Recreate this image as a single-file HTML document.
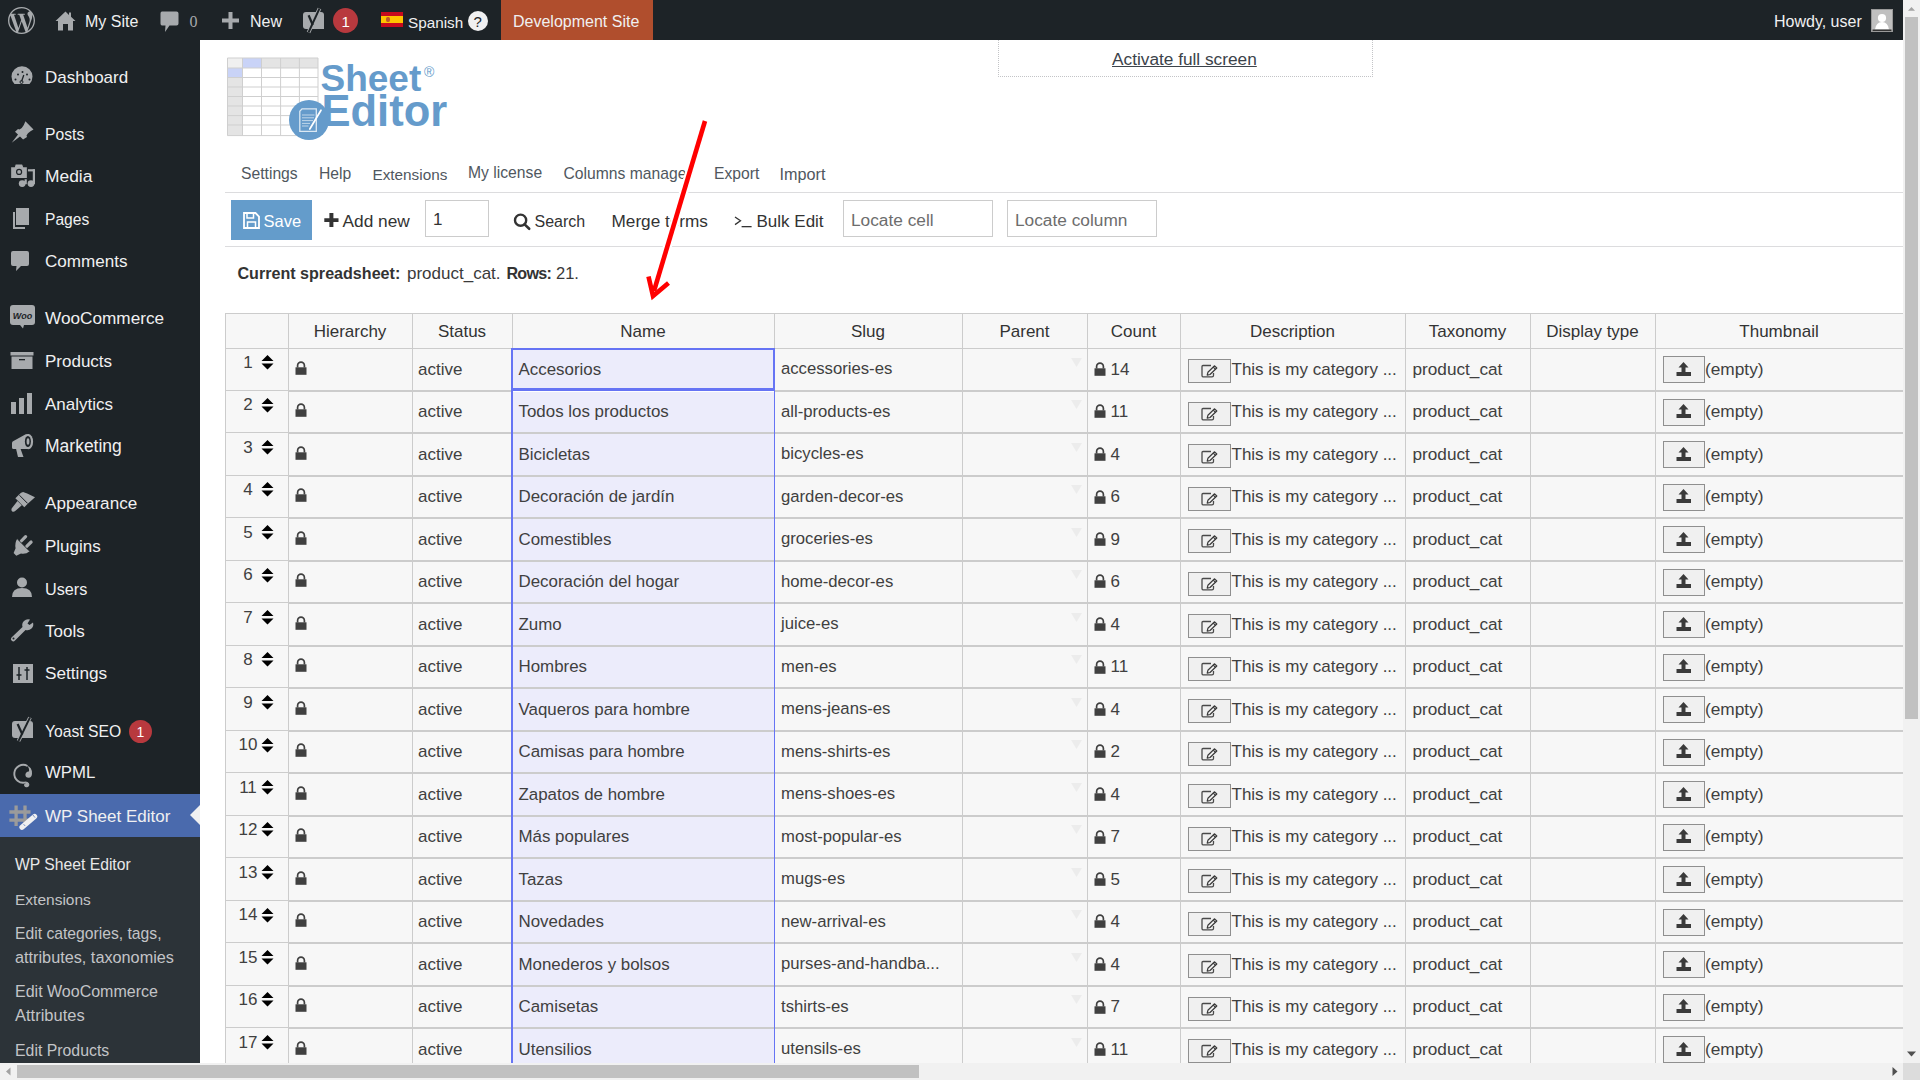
<!DOCTYPE html>
<html><head><meta charset="utf-8"><title>WP Sheet Editor</title>
<style>
html,body{margin:0;padding:0;}
body{width:1920px;height:1080px;overflow:hidden;position:relative;background:#fff;font-family:'Liberation Sans', sans-serif;}
.t{position:absolute;white-space:nowrap;}
.r{position:absolute;box-sizing:content-box;}
svg.r{overflow:visible;}
</style></head><body>
<div class="r" style="left:0px;top:0px;width:1903px;height:40px;background:#1d2327;"></div>
<svg class="r" style="left:8px;top:7px;" width="27" height="27" viewBox="0 0 24 24"><path fill="#a7aaad" d="M21.469 6.825c.84 1.537 1.318 3.3 1.318 5.175 0 3.979-2.156 7.456-5.363 9.325l3.295-9.527c.615-1.54.82-2.771.82-3.864 0-.405-.026-.78-.07-1.11m-7.981.105c.647-.03 1.232-.105 1.232-.105.582-.075.514-.93-.067-.899 0 0-1.755.135-2.88.135-1.064 0-2.85-.15-2.85-.15-.585-.03-.661.855-.075.885 0 0 .54.061 1.125.09l1.68 4.605-2.37 7.08L5.354 6.9c.649-.03 1.234-.1 1.234-.1.585-.075.516-.93-.065-.896 0 0-1.746.138-2.874.138-.2 0-.438-.008-.69-.015C4.911 3.15 8.235 1.215 12 1.215c2.809 0 5.365 1.072 7.286 2.833-.046-.003-.091-.009-.141-.009-1.06 0-1.812.923-1.812 1.914 0 .89.513 1.643 1.06 2.531.411.72.89 1.643.89 2.977 0 .915-.354 1.994-.821 3.479l-1.075 3.585-3.9-11.61.001.014zM12 22.784c-1.059 0-2.081-.153-3.048-.437l3.237-9.406 3.315 9.087c.024.053.05.101.078.149-1.12.393-2.325.609-3.582.609M1.211 12c0-1.564.336-3.05.935-4.39L7.29 21.709C3.694 19.96 1.212 16.271 1.211 12M12 0C5.385 0 0 5.385 0 12s5.385 12 12 12 12-5.385 12-12S18.615 0 12 0"/></svg>
<svg class="r" style="left:55px;top:11px;" width="21" height="20" viewBox="0 0 21 20"><path d="M10.5 0.5 L0.5 10 L3 10 L3 19.5 L8 19.5 L8 13 L13 13 L13 19.5 L18 19.5 L18 10 L20.5 10 L16 5.8 L16 1.5 L14 1.5 L14 3.9 Z" fill="#a7aaad"/></svg>
<div class="t" style="left:85.00px;top:14.46px;font-size:16px;line-height:16px;color:#f0f0f1;">My Site</div>
<svg class="r" style="left:160px;top:11px;" width="19" height="22" viewBox="0 0 19 22"><path d="M2 0.5 H16.5 Q18.5 0.5 18.5 2.5 V12.5 Q18.5 14.5 16.5 14.5 H9.5 L5 21 L5.5 14.5 H2 Q0.5 14.5 0.5 12.5 V2.5 Q0.5 0.5 2 0.5 Z" fill="#a7aaad"/></svg>
<div class="t" style="left:189.50px;top:14.46px;font-size:16px;line-height:16px;color:#a7aaad;font-family:'Liberation Serif',serif;">0</div>
<svg class="r" style="left:222px;top:12px;" width="17" height="17" viewBox="0 0 17 17"><path d="M6.5 0 H10.5 V6.5 H17 V10.5 H10.5 V17 H6.5 V10.5 H0 V6.5 H6.5 Z" fill="#a7aaad"/></svg>
<div class="t" style="left:250.00px;top:14.46px;font-size:16px;line-height:16px;color:#f0f0f1;">New</div>
<svg class="r" style="left:295px;top:0px;" width="40" height="40" viewBox="0 0 40 40"><path d="M8 15 Q8 12 11 12 H26 Q29 12 29 15 V29 H11 Q8 29 8 26 Z" fill="#a7aaad"/><path d="M24.5 8.5 L13.5 32.5" stroke="#a7aaad" stroke-width="3.8"/><path d="M24.5 8.5 L13.5 32.5" stroke="#1d2327" stroke-width="1.9"/><path d="M13.6 15.2 L17.8 25" stroke="#1d2327" stroke-width="2.2"/></svg>
<div class="r" style="left:333px;top:8px;width:25px;height:25px;border-radius:50%;background:#b8393e"></div>
<div class="t" style="left:341.50px;top:13.80px;font-size:15px;line-height:15px;color:#fff;">1</div>
<div class="r" style="left:381px;top:12px;width:22px;height:15px;background:#c60b1e;"></div>
<div class="r" style="left:381px;top:16px;width:22px;height:7px;background:#ffc400;"></div>
<div class="r" style="left:386px;top:17px;width:4px;height:5px;border-radius:40%;background:#c1592a"></div>
<div class="t" style="left:408.00px;top:14.55px;font-size:15.3px;line-height:15.3px;color:#f0f0f1;">Spanish</div>
<div class="r" style="left:468px;top:11px;width:20px;height:20px;border-radius:50%;background:#f0f0f1"></div>
<div class="t" style="left:473.50px;top:13.80px;font-size:15px;line-height:15px;color:#1d2327;">?</div>
<div class="r" style="left:501px;top:0px;width:152px;height:40px;background:#b04e2d;"></div>
<div class="t" style="left:513.00px;top:14.46px;font-size:16px;line-height:16px;color:#f0f0f1;">Development Site</div>
<div class="t" style="left:1774.00px;top:14.46px;font-size:16px;line-height:16px;color:#f0f0f1;">Howdy, user</div>
<div class="r" style="left:1871px;top:9px;width:22px;height:23px;background:#c0c0c0;box-shadow:inset 0 0 0 1px #999"></div>
<svg class="r" style="left:1872px;top:10px;" width="20" height="21" viewBox="0 0 20 21"><circle cx="10" cy="8" r="4.1" fill="#fff"/><path d="M3 19.5 Q4 12 10 12 Q16 12 17 19.5 Z" fill="#fff"/><rect x="0.5" y="19.5" width="19" height="1.5" fill="#333"/></svg>
<div class="r" style="left:0px;top:40px;width:200px;height:1023px;background:#1d2327;"></div>
<div class="t" style="left:45.00px;top:68.61px;font-size:17px;line-height:17px;color:#f0f0f1;">Dashboard</div>
<svg class="r" style="left:11px;top:67px;" width="26" height="24" viewBox="0 0 26 24"><path d="M3.5 17 A10.5 10.5 0 1 1 18.5 17 Z" fill="#a7aaad"/><circle cx="4.5" cy="12.5" r="1" fill="#1d2327"/><circle cx="7" cy="7.5" r="1" fill="#1d2327"/><circle cx="11.5" cy="5" r="1" fill="#1d2327"/><circle cx="16" cy="7.5" r="1" fill="#1d2327"/><circle cx="18.5" cy="12.5" r="1" fill="#1d2327"/><path d="M12.8 8 L10.5 14.5" stroke="#1d2327" stroke-width="1.3"/><circle cx="10.5" cy="15" r="1.5" fill="none" stroke="#1d2327" stroke-width="1"/></svg>
<div class="t" style="left:45.00px;top:126.96px;font-size:15.7px;line-height:15.7px;color:#f0f0f1;">Posts</div>
<svg class="r" style="left:10px;top:121px;" width="26" height="24" viewBox="0 0 26 24"><path d="M15.4 0.3 L23.5 8.4 L20.5 10.2 Q17.5 12 16.5 14.5 L17 16 L13.1 18.5 L10 15.5 L1.7 21.8 L8 13.5 L5 10.7 L8 8 L9.5 8.5 Q12 7.5 13.8 4 Z" fill="#a7aaad"/></svg>
<div class="t" style="left:45.00px;top:168.02px;font-size:17.4px;line-height:17.4px;color:#f0f0f1;">Media</div>
<svg class="r" style="left:10px;top:164px;" width="26" height="24" viewBox="0 0 26 24"><rect x="16.3" y="5.2" width="8.5" height="2.2" fill="#a7aaad"/><rect x="14.6" y="5.2" width="2.2" height="15" fill="#a7aaad"/><rect x="22.8" y="5.2" width="2.2" height="15" fill="#a7aaad"/><circle cx="12.2" cy="19.6" r="3.4" fill="#a7aaad"/><circle cx="21" cy="19.6" r="3.4" fill="#a7aaad"/><path d="M0.6 2.6 H4.4 L5.2 0 H12.6 L13.6 2.6 H17.4 V14.6 H0.6 Z" fill="#a7aaad" stroke="#1d2327" stroke-width="1.1"/><circle cx="9.1" cy="7.9" r="3.1" fill="#1d2327"/><circle cx="9.1" cy="7.9" r="1.9" fill="#a7aaad"/></svg>
<div class="t" style="left:45.00px;top:212.04px;font-size:15.6px;line-height:15.6px;color:#f0f0f1;">Pages</div>
<svg class="r" style="left:10px;top:207px;" width="26" height="24" viewBox="0 0 26 24"><path d="M6 1 H19 V18 H6 Z" fill="#a7aaad"/><path d="M3 5 H5 V20 H15 V22 H3 Z" fill="#a7aaad"/></svg>
<div class="t" style="left:45.00px;top:253.27px;font-size:17.1px;line-height:17.1px;color:#f0f0f1;">Comments</div>
<svg class="r" style="left:11px;top:250px;" width="26" height="24" viewBox="0 0 26 24"><path d="M2 1 H16 Q18 1 18 3 V14 Q18 16 16 16 H10 L5 21 L5.5 16 H2 Q0 16 0 14 V3 Q0 1 2 1 Z" fill="#a7aaad"/></svg>
<div class="t" style="left:45.00px;top:310.44px;font-size:17.2px;line-height:17.2px;color:#f0f0f1;">WooCommerce</div>
<svg class="r" style="left:10px;top:305px;" width="26" height="24" viewBox="0 0 26 24"><rect x="0" y="0" width="25" height="20" rx="3" fill="#a7aaad"/><path d="M10 20 L13 23.5 L14 20 Z" fill="#a7aaad"/><text x="12.5" y="13.5" font-family="Liberation Sans" font-style="italic" font-size="9" font-weight="bold" text-anchor="middle" fill="#1d2327">Woo</text></svg>
<div class="t" style="left:45.00px;top:353.11px;font-size:17px;line-height:17px;color:#f0f0f1;">Products</div>
<svg class="r" style="left:10px;top:352px;" width="26" height="24" viewBox="0 0 26 24"><rect x="0.5" y="0" width="23" height="3.5" fill="#a7aaad"/><rect x="1.5" y="4.5" width="21" height="12.5" fill="#a7aaad"/><rect x="9" y="7" width="6" height="1.3" fill="#1d2327"/></svg>
<div class="t" style="left:45.00px;top:395.61px;font-size:17px;line-height:17px;color:#f0f0f1;">Analytics</div>
<svg class="r" style="left:10px;top:393px;" width="26" height="24" viewBox="0 0 26 24"><rect x="1" y="9" width="5" height="12" fill="#a7aaad"/><rect x="9" y="5" width="5" height="16" fill="#a7aaad"/><rect x="17" y="0" width="5" height="21" fill="#a7aaad"/></svg>
<div class="t" style="left:45.00px;top:437.69px;font-size:17.5px;line-height:17.5px;color:#f0f0f1;">Marketing</div>
<svg class="r" style="left:10px;top:432px;" width="26" height="24" viewBox="0 0 26 24"><path d="M2 11 Q2 9.8 3.5 9.1 L15.7 2.3 H19 V17 H3.5 Q2 17 2 15.5 Z" fill="#a7aaad"/><ellipse cx="18.3" cy="9.7" rx="4.8" ry="7.6" fill="#a7aaad"/><ellipse cx="17.9" cy="9.5" rx="3" ry="5.6" fill="#1d2327"/><ellipse cx="18" cy="9.5" rx="1.4" ry="3.2" fill="#a7aaad"/><path d="M6.1 17 H10.6 L13.5 24.9 H8 Z" fill="#a7aaad"/></svg>
<div class="t" style="left:45.00px;top:495.27px;font-size:17.1px;line-height:17.1px;color:#f0f0f1;">Appearance</div>
<svg class="r" style="left:10px;top:491px;" width="26" height="24" viewBox="0 0 26 24"><path d="M9.1 3.6 Q11 1 13.1 1 Q15 1.5 17.2 2.5 L25 6.2 L18 12.5 Z" fill="#a7aaad"/><path d="M5.4 7.3 L9.1 3.6 L18 12.5 L14.3 16.2 Z" fill="#a7aaad"/><path d="M9.4 4.3 L17.4 12.3" stroke="#1d2327" stroke-width="0.9"/><path d="M7.5 10 L11.8 14.3 L5.5 19.8 Q3.5 21.6 2 20.2 Q0.6 18.6 2.4 16.6 Z" fill="#a7aaad"/></svg>
<div class="t" style="left:45.00px;top:537.86px;font-size:17px;line-height:17px;color:#f0f0f1;">Plugins</div>
<svg class="r" style="left:10px;top:534px;" width="26" height="24" viewBox="0 0 26 24"><path d="M11.3 7 L15.6 2.6 M16.7 12.3 L21.1 8" stroke="#a7aaad" stroke-width="3.2" stroke-linecap="round"/><path d="M7.2 4.8 L19.6 17.2 Q16 20.5 11 19.6 L6.3 21.8 L3.6 19 L5.6 14.2 Q4.6 9 7.2 4.8 Z" fill="#a7aaad"/><path d="M7.6 5.2 L19.2 16.8" stroke="#1d2327" stroke-width="0.8"/></svg>
<div class="t" style="left:45.00px;top:581.04px;font-size:16.2px;line-height:16.2px;color:#f0f0f1;">Users</div>
<svg class="r" style="left:11px;top:577px;" width="26" height="24" viewBox="0 0 26 24"><circle cx="11" cy="5.5" r="5" fill="#a7aaad"/><path d="M1 20 Q1 11 11 11 Q21 11 21 20 Z" fill="#a7aaad"/></svg>
<div class="t" style="left:45.00px;top:622.86px;font-size:17px;line-height:17px;color:#f0f0f1;">Tools</div>
<svg class="r" style="left:10px;top:619px;" width="26" height="24" viewBox="0 0 26 24"><path d="M20 0.5 A6 6 0 0 0 12.5 8 L1.5 18.5 A2 2 0 0 0 5 21.5 L15.5 11 A6 6 0 0 0 23 3.5 L19.5 6 L17.5 4.5 Z" fill="#a7aaad"/><circle cx="3.5" cy="19.5" r="1" fill="#1d2327"/></svg>
<div class="t" style="left:45.00px;top:665.19px;font-size:17.2px;line-height:17.2px;color:#f0f0f1;">Settings</div>
<svg class="r" style="left:12px;top:664px;" width="26" height="24" viewBox="0 0 26 24"><rect x="1" y="0" width="20" height="19" fill="#a7aaad"/><path d="M7 3 V16 M15 3 V16" stroke="#1d2327" stroke-width="1.5"/><path d="M4.5 11 H9.5 M12.5 6 H17.5" stroke="#1d2327" stroke-width="1.5"/></svg>
<div class="t" style="left:45.00px;top:723.71px;font-size:15.7px;line-height:15.7px;color:#f0f0f1;">Yoast SEO</div>
<svg class="r" style="left:10px;top:721px;" width="26" height="24" viewBox="0 0 26 24"><path d="M2 3 Q2 0 5 0 H20 Q23 0 23 3 V17 H5 Q2 17 2 14 Z" fill="#a7aaad"/><path d="M20 -3.5 L8.5 20" stroke="#a7aaad" stroke-width="3.8"/><path d="M20 -3.5 L8.5 20" stroke="#1d2327" stroke-width="1.9"/><path d="M7.6 3 L12.4 13.5" stroke="#1d2327" stroke-width="2.2"/></svg>
<div class="t" style="left:45.00px;top:765.28px;font-size:16.8px;line-height:16.8px;color:#f0f0f1;">WPML</div>
<svg class="r" style="left:11px;top:764px;" width="26" height="24" viewBox="0 0 26 24"><path d="M16.5 2 A8.9 8.9 0 1 0 14.8 18.3" fill="none" stroke="#a7aaad" stroke-width="1.9"/><path d="M16 1.8 Q21 3 21 9.5 Q21 13.5 17.6 13.8 Q14.4 13.8 14.4 10.8 Q14.6 8 17.8 7.6 Q19 5 16 1.8 Z" fill="#a7aaad"/><path d="M14.5 18.2 Q18.5 18.8 17.6 21.4 Q16.5 23.2 14.6 22.4 Q13 21.4 14.2 20" fill="#a7aaad" stroke="#a7aaad" stroke-width="1.2"/></svg>
<div class="r" style="left:0px;top:794px;width:200px;height:43px;background:#4a6aad;"></div>
<svg class="r" style="left:190px;top:805px;" width="10" height="20" viewBox="0 0 10 20"><path d="M10 0 L0 10 L10 20 Z" fill="#f0f0f1"/></svg>
<div class="t" style="left:45.00px;top:807.61px;font-size:17px;line-height:17px;color:#f0f0f1;">WP Sheet Editor</div>
<svg class="r" style="left:8px;top:804px;" width="26" height="24" viewBox="0 0 26 24"><path d="M8.1 1.4 V22 M17 1.4 V22 M1.4 8 H22.5 M1.4 16.2 H22.5" stroke="#9b9b9b" stroke-width="3.3"/><path d="M26.6 12.5 L14 23.2" stroke="#f0f0f1" stroke-width="5.2" stroke-linecap="round"/><path d="M24.8 10.8 L27 13.6" stroke="#4a6aad" stroke-width="0.7"/><path d="M15.6 20.2 L17.2 22" stroke="#4a6aad" stroke-width="0.7"/></svg>
<div class="r" style="left:129px;top:720px;width:23px;height:23px;border-radius:50%;background:#b8393e"></div>
<div class="t" style="left:136.50px;top:724.65px;font-size:14px;line-height:14px;color:#fff;">1</div>
<div class="r" style="left:0px;top:837px;width:200px;height:226px;background:#2c3338;"></div>
<div class="t" style="left:15.00px;top:856.71px;font-size:15.7px;line-height:15.7px;color:#e8e8e8;">WP Sheet Editor</div>
<div class="t" style="left:15.00px;top:892.38px;font-size:15.5px;line-height:15.5px;color:#c3c4c7;">Extensions</div>
<div class="t" style="left:15.00px;top:926.31px;font-size:15.7px;line-height:15.7px;color:#c3c4c7;">Edit categories, tags,</div>
<div class="t" style="left:15.00px;top:948.74px;font-size:16.25px;line-height:16.25px;color:#c3c4c7;">attributes, taxonomies</div>
<div class="t" style="left:15.00px;top:984.46px;font-size:16.0px;line-height:16.0px;color:#c3c4c7;">Edit WooCommerce</div>
<div class="t" style="left:15.00px;top:1007.03px;font-size:16.5px;line-height:16.5px;color:#c3c4c7;">Attributes</div>
<div class="t" style="left:15.00px;top:1042.58px;font-size:15.85px;line-height:15.85px;color:#c3c4c7;">Edit Products</div>
<div class="r" style="left:200px;top:40px;width:1703px;height:1023px;background:#ffffff;"></div>
<div class="r" style="left:998px;top:40px;width:373px;height:36px;border:1px dotted #c3c4c7;border-top:none"></div>
<div class="t" style="left:1112.00px;top:50.90px;font-size:17.25px;line-height:17.25px;color:#3c434a;text-decoration:underline;">Activate full screen</div>
<svg class="r" style="left:0;top:0" width="460" height="150" viewBox="0 0 460 150"><rect x="227.5" y="58" width="90.5" height="10" fill="#e4e4e4"/><rect x="227.5" y="58" width="15.0" height="77.6" fill="#e4e4e4"/><rect x="227.5" y="58" width="15.0" height="10" fill="#f0f0f0"/><rect x="242.5" y="58" width="19.0" height="10" fill="#c9d3f7"/><rect x="227.5" y="68" width="15.0" height="9.5" fill="#c9d3f7"/><line x1="227.5" y1="58" x2="227.5" y2="135.6" stroke="#cfcfcf" stroke-width="1"/><line x1="242.5" y1="58" x2="242.5" y2="135.6" stroke="#cfcfcf" stroke-width="1"/><line x1="261.5" y1="58" x2="261.5" y2="135.6" stroke="#cfcfcf" stroke-width="1"/><line x1="280.6" y1="58" x2="280.6" y2="135.6" stroke="#cfcfcf" stroke-width="1"/><line x1="299.4" y1="58" x2="299.4" y2="135.6" stroke="#cfcfcf" stroke-width="1"/><line x1="318" y1="58" x2="318" y2="135.6" stroke="#cfcfcf" stroke-width="1"/><line x1="227.5" y1="58" x2="318" y2="58" stroke="#cfcfcf" stroke-width="1"/><line x1="227.5" y1="68" x2="318" y2="68" stroke="#cfcfcf" stroke-width="1"/><line x1="227.5" y1="77.5" x2="318" y2="77.5" stroke="#cfcfcf" stroke-width="1"/><line x1="227.5" y1="87" x2="318" y2="87" stroke="#cfcfcf" stroke-width="1"/><line x1="227.5" y1="96.5" x2="318" y2="96.5" stroke="#cfcfcf" stroke-width="1"/><line x1="227.5" y1="106" x2="318" y2="106" stroke="#cfcfcf" stroke-width="1"/><line x1="227.5" y1="115.6" x2="318" y2="115.6" stroke="#cfcfcf" stroke-width="1"/><line x1="227.5" y1="125" x2="318" y2="125" stroke="#cfcfcf" stroke-width="1"/><line x1="227.5" y1="135.6" x2="318" y2="135.6" stroke="#cfcfcf" stroke-width="1"/><circle cx="309" cy="120" r="20" fill="#659bcb"/><path d="M302 108.8 H316.3 V131.4 H299.8 V111.2 Z" fill="none" stroke="#dbe8f3" stroke-width="1.3"/><path d="M302 115 H314.5 M302 117.8 H314 M302 120.6 H313 M302 123.4 H310 M302 126 H308.5" stroke="#c9dcec" stroke-width="0.9"/><path d="M309.8 129 L321 110.2" stroke="#fff" stroke-width="1.7" stroke-linecap="round"/></svg>
<div class="t" style="left:320.50px;top:60.18px;font-size:37px;line-height:37px;color:#659bcb;font-weight:bold;">Sheet</div>
<div class="t" style="left:321.50px;top:90.18px;font-size:43.5px;line-height:43.5px;color:#659bcb;font-weight:bold;">Editor</div>
<div class="t" style="left:424.00px;top:64.65px;font-size:14px;line-height:14px;color:#659bcb;">&#174;</div>
<div class="t" style="left:241.00px;top:166.21px;font-size:15.7px;line-height:15.7px;color:#50575e;">Settings</div>
<div class="t" style="left:319.00px;top:166.21px;font-size:15.7px;line-height:15.7px;color:#50575e;">Help</div>
<div class="t" style="left:372.50px;top:166.55px;font-size:15.3px;line-height:15.3px;color:#50575e;">Extensions</div>
<div class="t" style="left:468.00px;top:164.71px;font-size:15.7px;line-height:15.7px;color:#50575e;">My license</div>
<div class="t" style="left:563.50px;top:166.21px;font-size:15.7px;line-height:15.7px;color:#50575e;">Columns manager</div>
<div class="t" style="left:714.00px;top:166.21px;font-size:15.7px;line-height:15.7px;color:#50575e;">Export</div>
<div class="t" style="left:779.50px;top:165.79px;font-size:16.2px;line-height:16.2px;color:#50575e;">Import</div>
<div class="r" style="left:225px;top:192px;width:1678px;height:1px;background:#dcdcde;"></div>
<div class="r" style="left:231px;top:200px;width:81px;height:40px;background:#649ccb;"></div>
<svg class="r" style="left:243px;top:212px;" width="17" height="17" viewBox="0 0 17 17"><path d="M1 1 H12.5 L16 4.5 V16 H1 Z" fill="none" stroke="#fff" stroke-width="1.8"/><rect x="4" y="1" width="6.5" height="5" fill="none" stroke="#fff" stroke-width="1.5"/><rect x="4.5" y="10" width="8" height="6" fill="none" stroke="#fff" stroke-width="1.5"/></svg>
<div class="t" style="left:263.50px;top:213.03px;font-size:16.5px;line-height:16.5px;color:#ffffff;">Save</div>
<svg class="r" style="left:324px;top:213px;" width="15" height="14" viewBox="0 0 15 14"><path d="M5.4 0 H9.4 V5.2 H14.5 V9 H9.4 V14 H5.4 V9 H0.3 V5.2 H5.4 Z" fill="#333"/></svg>
<div class="t" style="left:342.50px;top:213.36px;font-size:17.3px;line-height:17.3px;color:#333;">Add new</div>
<div class="r" style="left:425px;top:200px;width:62px;height:35px;border:1px solid #ccc;background:#fff"></div>
<div class="t" style="left:433.00px;top:211.11px;font-size:17px;line-height:17px;color:#333;">1</div>
<svg class="r" style="left:513px;top:213px;" width="18" height="18" viewBox="0 0 18 18"><circle cx="7.6" cy="7.2" r="5.6" fill="none" stroke="#333" stroke-width="2.4"/><path d="M11.6 11.4 L16.2 15.8" stroke="#333" stroke-width="2.6" stroke-linecap="round"/></svg>
<div class="t" style="left:534.50px;top:214.46px;font-size:16px;line-height:16px;color:#333;">Search</div>
<div class="t" style="left:611.50px;top:213.44px;font-size:17.2px;line-height:17.2px;color:#333;">Merge terms</div>
<svg class="r" style="left:734px;top:216px;" width="18" height="12" viewBox="0 0 18 12"><path d="M1 1 L6.5 4.8 L1 8.6" fill="none" stroke="#333" stroke-width="1.3"/><rect x="7.6" y="10" width="10" height="1.3" fill="#333"/></svg>
<div class="t" style="left:756.50px;top:212.61px;font-size:17px;line-height:17px;color:#333;">Bulk Edit</div>
<div class="r" style="left:843px;top:200px;width:148px;height:35px;border:1px solid #ccc;background:#fff"></div>
<div class="t" style="left:851.00px;top:212.36px;font-size:17.3px;line-height:17.3px;color:#6d6d6d;">Locate cell</div>
<div class="r" style="left:1007px;top:200px;width:148px;height:35px;border:1px solid #ccc;background:#fff"></div>
<div class="t" style="left:1015.00px;top:212.36px;font-size:17.3px;line-height:17.3px;color:#6d6d6d;">Locate column</div>
<div class="r" style="left:225px;top:246px;width:1678px;height:1px;background:#dcdcde;"></div>
<div class="t" style="left:237.50px;top:265.37px;font-size:16.1px;line-height:16.1px;color:#333;"><b>Current spreadsheet:</b></div>
<div class="t" style="left:407.00px;top:264.61px;font-size:17px;line-height:17px;color:#3a3a3a;">product_cat.</div>
<div class="t" style="left:506.50px;top:265.37px;font-size:16.1px;line-height:16.1px;color:#333;letter-spacing:-0.75px;"><b>Rows:</b></div>
<div class="t" style="left:556.00px;top:265.03px;font-size:16.5px;line-height:16.5px;color:#3a3a3a;">21.</div>
<div class="r" style="left:225px;top:313px;width:1678px;height:750px;background:#f7f7f7;"></div>
<div class="r" style="left:512px;top:349px;width:262px;height:714px;background:#ececfb;"></div>
<div class="r" style="left:225px;top:313px;width:1678px;height:1px;background:#cccccc;"></div>
<div class="r" style="left:225px;top:348px;width:1678px;height:1px;background:#cccccc;"></div>
<div class="r" style="left:225px;top:313px;width:1px;height:750px;background:#cccccc;"></div>
<div class="r" style="left:288px;top:313px;width:1px;height:750px;background:#cccccc;"></div>
<div class="r" style="left:412px;top:313px;width:1px;height:750px;background:#cccccc;"></div>
<div class="r" style="left:512px;top:313px;width:1px;height:750px;background:#cccccc;"></div>
<div class="r" style="left:774px;top:313px;width:1px;height:750px;background:#cccccc;"></div>
<div class="r" style="left:962px;top:313px;width:1px;height:750px;background:#cccccc;"></div>
<div class="r" style="left:1087px;top:313px;width:1px;height:750px;background:#cccccc;"></div>
<div class="r" style="left:1180px;top:313px;width:1px;height:750px;background:#cccccc;"></div>
<div class="r" style="left:1405px;top:313px;width:1px;height:750px;background:#cccccc;"></div>
<div class="r" style="left:1530px;top:313px;width:1px;height:750px;background:#cccccc;"></div>
<div class="r" style="left:1655px;top:313px;width:1px;height:750px;background:#cccccc;"></div>
<div class="r" style="left:288px;top:390px;width:1615px;height:2px;background:#cccccc;"></div>
<div class="r" style="left:225px;top:390px;width:63px;height:1px;background:#cccccc;"></div>
<div class="t" style="left:228px;top:353.51px;width:40px;text-align:center;font-size:17px;line-height:17px;color:#404040">1</div>
<svg class="r" style="left:261px;top:355px;" width="13" height="15" viewBox="0 0 13 15"><path d="M6.5 0 L12.5 6 H0.5 Z M0.5 8.5 H12.5 L6.5 14.5 Z" fill="#000"/></svg>
<svg class="r" style="left:295px;top:361px" width="12" height="14" viewBox="0 0 12 14"><path d="M2.6 6.5 V4.6 A3.4 3.4 0 0 1 9.4 4.6 V6.5" fill="none" stroke="#404040" stroke-width="1.7"/><rect x="0.5" y="6.3" width="11" height="7.5" fill="#404040"/></svg>
<div class="t" style="left:418.00px;top:360.91px;font-size:17px;line-height:17px;color:#404040;">active</div>
<div class="t" style="left:518.50px;top:361.99px;font-size:16.9px;line-height:16.9px;color:#404040;">Accesorios</div>
<div class="t" style="left:781.00px;top:361.16px;font-size:16.7px;line-height:16.7px;color:#404040;">accessories-es</div>
<svg class="r" style="left:1071px;top:358px;" width="11" height="9" viewBox="0 0 11 9"><path d="M0 0 H11 L5.5 9 Z" fill="#ececec"/></svg>
<svg class="r" style="left:1094px;top:362px" width="12" height="14" viewBox="0 0 12 14"><path d="M2.6 6.5 V4.6 A3.4 3.4 0 0 1 9.4 4.6 V6.5" fill="none" stroke="#404040" stroke-width="1.7"/><rect x="0.5" y="6.3" width="11" height="7.5" fill="#404040"/></svg>
<div class="t" style="left:1110.50px;top:360.91px;font-size:17px;line-height:17px;color:#404040;">14</div>
<div class="r" style="left:1188px;top:359px;width:41px;height:22px;border:1px solid #8f8f8f;background:#f0f0f0"></div>
<svg class="r" style="left:1200px;top:364px;" width="18" height="14" viewBox="0 0 18 14"><path d="M11 1.5 H3 Q2 1.5 2 2.5 V11.5 Q2 12.8 3 12.8 H12 Q13.5 12.8 13.5 11.5 V9" fill="none" stroke="#4a4a4a" stroke-width="1.3"/><path d="M7.2 11.2 L7.9 8.3 L14.6 1.8 L16.8 4 L10 10.5 Z" fill="none" stroke="#3a3a3a" stroke-width="1.2" stroke-linejoin="round"/><path d="M13.3 3.1 L15.5 5.3" stroke="#3a3a3a" stroke-width="1.2"/></svg>
<div class="t" style="left:1231.50px;top:360.91px;font-size:17px;line-height:17px;color:#404040;">This is my category ...</div>
<div class="t" style="left:1412.50px;top:360.74px;font-size:17.2px;line-height:17.2px;color:#404040;">product_cat</div>
<div class="r" style="left:1663px;top:356px;width:40px;height:25px;border:1px solid #8f8f8f;background:#f0f0f0"></div>
<svg class="r" style="left:1676px;top:362px;" width="16" height="14" viewBox="0 0 16 14"><path d="M7.5 0 L12.5 5.5 H9.5 V10.5 H5.5 V5.5 H2.5 Z" fill="#3a3a3a"/><rect x="0.5" y="10" width="14.5" height="4" fill="#3a3a3a"/></svg>
<div class="t" style="left:1705.00px;top:360.66px;font-size:17.3px;line-height:17.3px;color:#404040;">(empty)</div>
<div class="r" style="left:288px;top:432px;width:1615px;height:2px;background:#cccccc;"></div>
<div class="r" style="left:225px;top:432px;width:63px;height:1px;background:#cccccc;"></div>
<div class="t" style="left:228px;top:396.01px;width:40px;text-align:center;font-size:17px;line-height:17px;color:#404040">2</div>
<svg class="r" style="left:261px;top:398px;" width="13" height="15" viewBox="0 0 13 15"><path d="M6.5 0 L12.5 6 H0.5 Z M0.5 8.5 H12.5 L6.5 14.5 Z" fill="#000"/></svg>
<svg class="r" style="left:295px;top:403px" width="12" height="14" viewBox="0 0 12 14"><path d="M2.6 6.5 V4.6 A3.4 3.4 0 0 1 9.4 4.6 V6.5" fill="none" stroke="#404040" stroke-width="1.7"/><rect x="0.5" y="6.3" width="11" height="7.5" fill="#404040"/></svg>
<div class="t" style="left:418.00px;top:403.41px;font-size:17px;line-height:17px;color:#404040;">active</div>
<div class="t" style="left:518.50px;top:404.49px;font-size:16.9px;line-height:16.9px;color:#404040;">Todos los productos</div>
<div class="t" style="left:781.00px;top:403.66px;font-size:16.7px;line-height:16.7px;color:#404040;">all-products-es</div>
<svg class="r" style="left:1071px;top:400px;" width="11" height="9" viewBox="0 0 11 9"><path d="M0 0 H11 L5.5 9 Z" fill="#ececec"/></svg>
<svg class="r" style="left:1094px;top:404px" width="12" height="14" viewBox="0 0 12 14"><path d="M2.6 6.5 V4.6 A3.4 3.4 0 0 1 9.4 4.6 V6.5" fill="none" stroke="#404040" stroke-width="1.7"/><rect x="0.5" y="6.3" width="11" height="7.5" fill="#404040"/></svg>
<div class="t" style="left:1110.50px;top:403.41px;font-size:17px;line-height:17px;color:#404040;">11</div>
<div class="r" style="left:1188px;top:402px;width:41px;height:22px;border:1px solid #8f8f8f;background:#f0f0f0"></div>
<svg class="r" style="left:1200px;top:407px;" width="18" height="14" viewBox="0 0 18 14"><path d="M11 1.5 H3 Q2 1.5 2 2.5 V11.5 Q2 12.8 3 12.8 H12 Q13.5 12.8 13.5 11.5 V9" fill="none" stroke="#4a4a4a" stroke-width="1.3"/><path d="M7.2 11.2 L7.9 8.3 L14.6 1.8 L16.8 4 L10 10.5 Z" fill="none" stroke="#3a3a3a" stroke-width="1.2" stroke-linejoin="round"/><path d="M13.3 3.1 L15.5 5.3" stroke="#3a3a3a" stroke-width="1.2"/></svg>
<div class="t" style="left:1231.50px;top:403.41px;font-size:17px;line-height:17px;color:#404040;">This is my category ...</div>
<div class="t" style="left:1412.50px;top:403.24px;font-size:17.2px;line-height:17.2px;color:#404040;">product_cat</div>
<div class="r" style="left:1663px;top:399px;width:40px;height:25px;border:1px solid #8f8f8f;background:#f0f0f0"></div>
<svg class="r" style="left:1676px;top:404px;" width="16" height="14" viewBox="0 0 16 14"><path d="M7.5 0 L12.5 5.5 H9.5 V10.5 H5.5 V5.5 H2.5 Z" fill="#3a3a3a"/><rect x="0.5" y="10" width="14.5" height="4" fill="#3a3a3a"/></svg>
<div class="t" style="left:1705.00px;top:403.16px;font-size:17.3px;line-height:17.3px;color:#404040;">(empty)</div>
<div class="r" style="left:288px;top:475px;width:1615px;height:2px;background:#cccccc;"></div>
<div class="r" style="left:225px;top:475px;width:63px;height:1px;background:#cccccc;"></div>
<div class="t" style="left:228px;top:438.51px;width:40px;text-align:center;font-size:17px;line-height:17px;color:#404040">3</div>
<svg class="r" style="left:261px;top:440px;" width="13" height="15" viewBox="0 0 13 15"><path d="M6.5 0 L12.5 6 H0.5 Z M0.5 8.5 H12.5 L6.5 14.5 Z" fill="#000"/></svg>
<svg class="r" style="left:295px;top:446px" width="12" height="14" viewBox="0 0 12 14"><path d="M2.6 6.5 V4.6 A3.4 3.4 0 0 1 9.4 4.6 V6.5" fill="none" stroke="#404040" stroke-width="1.7"/><rect x="0.5" y="6.3" width="11" height="7.5" fill="#404040"/></svg>
<div class="t" style="left:418.00px;top:445.91px;font-size:17px;line-height:17px;color:#404040;">active</div>
<div class="t" style="left:518.50px;top:446.99px;font-size:16.9px;line-height:16.9px;color:#404040;">Bicicletas</div>
<div class="t" style="left:781.00px;top:446.16px;font-size:16.7px;line-height:16.7px;color:#404040;">bicycles-es</div>
<svg class="r" style="left:1071px;top:443px;" width="11" height="9" viewBox="0 0 11 9"><path d="M0 0 H11 L5.5 9 Z" fill="#ececec"/></svg>
<svg class="r" style="left:1094px;top:447px" width="12" height="14" viewBox="0 0 12 14"><path d="M2.6 6.5 V4.6 A3.4 3.4 0 0 1 9.4 4.6 V6.5" fill="none" stroke="#404040" stroke-width="1.7"/><rect x="0.5" y="6.3" width="11" height="7.5" fill="#404040"/></svg>
<div class="t" style="left:1110.50px;top:445.91px;font-size:17px;line-height:17px;color:#404040;">4</div>
<div class="r" style="left:1188px;top:444px;width:41px;height:22px;border:1px solid #8f8f8f;background:#f0f0f0"></div>
<svg class="r" style="left:1200px;top:450px;" width="18" height="14" viewBox="0 0 18 14"><path d="M11 1.5 H3 Q2 1.5 2 2.5 V11.5 Q2 12.8 3 12.8 H12 Q13.5 12.8 13.5 11.5 V9" fill="none" stroke="#4a4a4a" stroke-width="1.3"/><path d="M7.2 11.2 L7.9 8.3 L14.6 1.8 L16.8 4 L10 10.5 Z" fill="none" stroke="#3a3a3a" stroke-width="1.2" stroke-linejoin="round"/><path d="M13.3 3.1 L15.5 5.3" stroke="#3a3a3a" stroke-width="1.2"/></svg>
<div class="t" style="left:1231.50px;top:445.91px;font-size:17px;line-height:17px;color:#404040;">This is my category ...</div>
<div class="t" style="left:1412.50px;top:445.74px;font-size:17.2px;line-height:17.2px;color:#404040;">product_cat</div>
<div class="r" style="left:1663px;top:441px;width:40px;height:25px;border:1px solid #8f8f8f;background:#f0f0f0"></div>
<svg class="r" style="left:1676px;top:447px;" width="16" height="14" viewBox="0 0 16 14"><path d="M7.5 0 L12.5 5.5 H9.5 V10.5 H5.5 V5.5 H2.5 Z" fill="#3a3a3a"/><rect x="0.5" y="10" width="14.5" height="4" fill="#3a3a3a"/></svg>
<div class="t" style="left:1705.00px;top:445.66px;font-size:17.3px;line-height:17.3px;color:#404040;">(empty)</div>
<div class="r" style="left:288px;top:517px;width:1615px;height:2px;background:#cccccc;"></div>
<div class="r" style="left:225px;top:517px;width:63px;height:1px;background:#cccccc;"></div>
<div class="t" style="left:228px;top:481.01px;width:40px;text-align:center;font-size:17px;line-height:17px;color:#404040">4</div>
<svg class="r" style="left:261px;top:482px;" width="13" height="15" viewBox="0 0 13 15"><path d="M6.5 0 L12.5 6 H0.5 Z M0.5 8.5 H12.5 L6.5 14.5 Z" fill="#000"/></svg>
<svg class="r" style="left:295px;top:488px" width="12" height="14" viewBox="0 0 12 14"><path d="M2.6 6.5 V4.6 A3.4 3.4 0 0 1 9.4 4.6 V6.5" fill="none" stroke="#404040" stroke-width="1.7"/><rect x="0.5" y="6.3" width="11" height="7.5" fill="#404040"/></svg>
<div class="t" style="left:418.00px;top:488.41px;font-size:17px;line-height:17px;color:#404040;">active</div>
<div class="t" style="left:518.50px;top:489.49px;font-size:16.9px;line-height:16.9px;color:#404040;">Decoraci&oacute;n de jard&iacute;n</div>
<div class="t" style="left:781.00px;top:488.66px;font-size:16.7px;line-height:16.7px;color:#404040;">garden-decor-es</div>
<svg class="r" style="left:1071px;top:485px;" width="11" height="9" viewBox="0 0 11 9"><path d="M0 0 H11 L5.5 9 Z" fill="#ececec"/></svg>
<svg class="r" style="left:1094px;top:490px" width="12" height="14" viewBox="0 0 12 14"><path d="M2.6 6.5 V4.6 A3.4 3.4 0 0 1 9.4 4.6 V6.5" fill="none" stroke="#404040" stroke-width="1.7"/><rect x="0.5" y="6.3" width="11" height="7.5" fill="#404040"/></svg>
<div class="t" style="left:1110.50px;top:488.41px;font-size:17px;line-height:17px;color:#404040;">6</div>
<div class="r" style="left:1188px;top:487px;width:41px;height:22px;border:1px solid #8f8f8f;background:#f0f0f0"></div>
<svg class="r" style="left:1200px;top:492px;" width="18" height="14" viewBox="0 0 18 14"><path d="M11 1.5 H3 Q2 1.5 2 2.5 V11.5 Q2 12.8 3 12.8 H12 Q13.5 12.8 13.5 11.5 V9" fill="none" stroke="#4a4a4a" stroke-width="1.3"/><path d="M7.2 11.2 L7.9 8.3 L14.6 1.8 L16.8 4 L10 10.5 Z" fill="none" stroke="#3a3a3a" stroke-width="1.2" stroke-linejoin="round"/><path d="M13.3 3.1 L15.5 5.3" stroke="#3a3a3a" stroke-width="1.2"/></svg>
<div class="t" style="left:1231.50px;top:488.41px;font-size:17px;line-height:17px;color:#404040;">This is my category ...</div>
<div class="t" style="left:1412.50px;top:488.24px;font-size:17.2px;line-height:17.2px;color:#404040;">product_cat</div>
<div class="r" style="left:1663px;top:484px;width:40px;height:25px;border:1px solid #8f8f8f;background:#f0f0f0"></div>
<svg class="r" style="left:1676px;top:489px;" width="16" height="14" viewBox="0 0 16 14"><path d="M7.5 0 L12.5 5.5 H9.5 V10.5 H5.5 V5.5 H2.5 Z" fill="#3a3a3a"/><rect x="0.5" y="10" width="14.5" height="4" fill="#3a3a3a"/></svg>
<div class="t" style="left:1705.00px;top:488.16px;font-size:17.3px;line-height:17.3px;color:#404040;">(empty)</div>
<div class="r" style="left:288px;top:560px;width:1615px;height:2px;background:#cccccc;"></div>
<div class="r" style="left:225px;top:560px;width:63px;height:1px;background:#cccccc;"></div>
<div class="t" style="left:228px;top:523.51px;width:40px;text-align:center;font-size:17px;line-height:17px;color:#404040">5</div>
<svg class="r" style="left:261px;top:525px;" width="13" height="15" viewBox="0 0 13 15"><path d="M6.5 0 L12.5 6 H0.5 Z M0.5 8.5 H12.5 L6.5 14.5 Z" fill="#000"/></svg>
<svg class="r" style="left:295px;top:531px" width="12" height="14" viewBox="0 0 12 14"><path d="M2.6 6.5 V4.6 A3.4 3.4 0 0 1 9.4 4.6 V6.5" fill="none" stroke="#404040" stroke-width="1.7"/><rect x="0.5" y="6.3" width="11" height="7.5" fill="#404040"/></svg>
<div class="t" style="left:418.00px;top:530.91px;font-size:17px;line-height:17px;color:#404040;">active</div>
<div class="t" style="left:518.50px;top:531.99px;font-size:16.9px;line-height:16.9px;color:#404040;">Comestibles</div>
<div class="t" style="left:781.00px;top:531.16px;font-size:16.7px;line-height:16.7px;color:#404040;">groceries-es</div>
<svg class="r" style="left:1071px;top:528px;" width="11" height="9" viewBox="0 0 11 9"><path d="M0 0 H11 L5.5 9 Z" fill="#ececec"/></svg>
<svg class="r" style="left:1094px;top:532px" width="12" height="14" viewBox="0 0 12 14"><path d="M2.6 6.5 V4.6 A3.4 3.4 0 0 1 9.4 4.6 V6.5" fill="none" stroke="#404040" stroke-width="1.7"/><rect x="0.5" y="6.3" width="11" height="7.5" fill="#404040"/></svg>
<div class="t" style="left:1110.50px;top:530.91px;font-size:17px;line-height:17px;color:#404040;">9</div>
<div class="r" style="left:1188px;top:529px;width:41px;height:22px;border:1px solid #8f8f8f;background:#f0f0f0"></div>
<svg class="r" style="left:1200px;top:534px;" width="18" height="14" viewBox="0 0 18 14"><path d="M11 1.5 H3 Q2 1.5 2 2.5 V11.5 Q2 12.8 3 12.8 H12 Q13.5 12.8 13.5 11.5 V9" fill="none" stroke="#4a4a4a" stroke-width="1.3"/><path d="M7.2 11.2 L7.9 8.3 L14.6 1.8 L16.8 4 L10 10.5 Z" fill="none" stroke="#3a3a3a" stroke-width="1.2" stroke-linejoin="round"/><path d="M13.3 3.1 L15.5 5.3" stroke="#3a3a3a" stroke-width="1.2"/></svg>
<div class="t" style="left:1231.50px;top:530.91px;font-size:17px;line-height:17px;color:#404040;">This is my category ...</div>
<div class="t" style="left:1412.50px;top:530.74px;font-size:17.2px;line-height:17.2px;color:#404040;">product_cat</div>
<div class="r" style="left:1663px;top:526px;width:40px;height:25px;border:1px solid #8f8f8f;background:#f0f0f0"></div>
<svg class="r" style="left:1676px;top:532px;" width="16" height="14" viewBox="0 0 16 14"><path d="M7.5 0 L12.5 5.5 H9.5 V10.5 H5.5 V5.5 H2.5 Z" fill="#3a3a3a"/><rect x="0.5" y="10" width="14.5" height="4" fill="#3a3a3a"/></svg>
<div class="t" style="left:1705.00px;top:530.66px;font-size:17.3px;line-height:17.3px;color:#404040;">(empty)</div>
<div class="r" style="left:288px;top:602px;width:1615px;height:2px;background:#cccccc;"></div>
<div class="r" style="left:225px;top:602px;width:63px;height:1px;background:#cccccc;"></div>
<div class="t" style="left:228px;top:566.01px;width:40px;text-align:center;font-size:17px;line-height:17px;color:#404040">6</div>
<svg class="r" style="left:261px;top:568px;" width="13" height="15" viewBox="0 0 13 15"><path d="M6.5 0 L12.5 6 H0.5 Z M0.5 8.5 H12.5 L6.5 14.5 Z" fill="#000"/></svg>
<svg class="r" style="left:295px;top:573px" width="12" height="14" viewBox="0 0 12 14"><path d="M2.6 6.5 V4.6 A3.4 3.4 0 0 1 9.4 4.6 V6.5" fill="none" stroke="#404040" stroke-width="1.7"/><rect x="0.5" y="6.3" width="11" height="7.5" fill="#404040"/></svg>
<div class="t" style="left:418.00px;top:573.41px;font-size:17px;line-height:17px;color:#404040;">active</div>
<div class="t" style="left:518.50px;top:574.49px;font-size:16.9px;line-height:16.9px;color:#404040;">Decoraci&oacute;n del hogar</div>
<div class="t" style="left:781.00px;top:573.66px;font-size:16.7px;line-height:16.7px;color:#404040;">home-decor-es</div>
<svg class="r" style="left:1071px;top:570px;" width="11" height="9" viewBox="0 0 11 9"><path d="M0 0 H11 L5.5 9 Z" fill="#ececec"/></svg>
<svg class="r" style="left:1094px;top:574px" width="12" height="14" viewBox="0 0 12 14"><path d="M2.6 6.5 V4.6 A3.4 3.4 0 0 1 9.4 4.6 V6.5" fill="none" stroke="#404040" stroke-width="1.7"/><rect x="0.5" y="6.3" width="11" height="7.5" fill="#404040"/></svg>
<div class="t" style="left:1110.50px;top:573.41px;font-size:17px;line-height:17px;color:#404040;">6</div>
<div class="r" style="left:1188px;top:572px;width:41px;height:22px;border:1px solid #8f8f8f;background:#f0f0f0"></div>
<svg class="r" style="left:1200px;top:577px;" width="18" height="14" viewBox="0 0 18 14"><path d="M11 1.5 H3 Q2 1.5 2 2.5 V11.5 Q2 12.8 3 12.8 H12 Q13.5 12.8 13.5 11.5 V9" fill="none" stroke="#4a4a4a" stroke-width="1.3"/><path d="M7.2 11.2 L7.9 8.3 L14.6 1.8 L16.8 4 L10 10.5 Z" fill="none" stroke="#3a3a3a" stroke-width="1.2" stroke-linejoin="round"/><path d="M13.3 3.1 L15.5 5.3" stroke="#3a3a3a" stroke-width="1.2"/></svg>
<div class="t" style="left:1231.50px;top:573.41px;font-size:17px;line-height:17px;color:#404040;">This is my category ...</div>
<div class="t" style="left:1412.50px;top:573.24px;font-size:17.2px;line-height:17.2px;color:#404040;">product_cat</div>
<div class="r" style="left:1663px;top:569px;width:40px;height:25px;border:1px solid #8f8f8f;background:#f0f0f0"></div>
<svg class="r" style="left:1676px;top:574px;" width="16" height="14" viewBox="0 0 16 14"><path d="M7.5 0 L12.5 5.5 H9.5 V10.5 H5.5 V5.5 H2.5 Z" fill="#3a3a3a"/><rect x="0.5" y="10" width="14.5" height="4" fill="#3a3a3a"/></svg>
<div class="t" style="left:1705.00px;top:573.16px;font-size:17.3px;line-height:17.3px;color:#404040;">(empty)</div>
<div class="r" style="left:288px;top:645px;width:1615px;height:2px;background:#cccccc;"></div>
<div class="r" style="left:225px;top:645px;width:63px;height:1px;background:#cccccc;"></div>
<div class="t" style="left:228px;top:608.51px;width:40px;text-align:center;font-size:17px;line-height:17px;color:#404040">7</div>
<svg class="r" style="left:261px;top:610px;" width="13" height="15" viewBox="0 0 13 15"><path d="M6.5 0 L12.5 6 H0.5 Z M0.5 8.5 H12.5 L6.5 14.5 Z" fill="#000"/></svg>
<svg class="r" style="left:295px;top:616px" width="12" height="14" viewBox="0 0 12 14"><path d="M2.6 6.5 V4.6 A3.4 3.4 0 0 1 9.4 4.6 V6.5" fill="none" stroke="#404040" stroke-width="1.7"/><rect x="0.5" y="6.3" width="11" height="7.5" fill="#404040"/></svg>
<div class="t" style="left:418.00px;top:615.91px;font-size:17px;line-height:17px;color:#404040;">active</div>
<div class="t" style="left:518.50px;top:616.99px;font-size:16.9px;line-height:16.9px;color:#404040;">Zumo</div>
<div class="t" style="left:781.00px;top:616.16px;font-size:16.7px;line-height:16.7px;color:#404040;">juice-es</div>
<svg class="r" style="left:1071px;top:613px;" width="11" height="9" viewBox="0 0 11 9"><path d="M0 0 H11 L5.5 9 Z" fill="#ececec"/></svg>
<svg class="r" style="left:1094px;top:617px" width="12" height="14" viewBox="0 0 12 14"><path d="M2.6 6.5 V4.6 A3.4 3.4 0 0 1 9.4 4.6 V6.5" fill="none" stroke="#404040" stroke-width="1.7"/><rect x="0.5" y="6.3" width="11" height="7.5" fill="#404040"/></svg>
<div class="t" style="left:1110.50px;top:615.91px;font-size:17px;line-height:17px;color:#404040;">4</div>
<div class="r" style="left:1188px;top:614px;width:41px;height:22px;border:1px solid #8f8f8f;background:#f0f0f0"></div>
<svg class="r" style="left:1200px;top:620px;" width="18" height="14" viewBox="0 0 18 14"><path d="M11 1.5 H3 Q2 1.5 2 2.5 V11.5 Q2 12.8 3 12.8 H12 Q13.5 12.8 13.5 11.5 V9" fill="none" stroke="#4a4a4a" stroke-width="1.3"/><path d="M7.2 11.2 L7.9 8.3 L14.6 1.8 L16.8 4 L10 10.5 Z" fill="none" stroke="#3a3a3a" stroke-width="1.2" stroke-linejoin="round"/><path d="M13.3 3.1 L15.5 5.3" stroke="#3a3a3a" stroke-width="1.2"/></svg>
<div class="t" style="left:1231.50px;top:615.91px;font-size:17px;line-height:17px;color:#404040;">This is my category ...</div>
<div class="t" style="left:1412.50px;top:615.74px;font-size:17.2px;line-height:17.2px;color:#404040;">product_cat</div>
<div class="r" style="left:1663px;top:611px;width:40px;height:25px;border:1px solid #8f8f8f;background:#f0f0f0"></div>
<svg class="r" style="left:1676px;top:617px;" width="16" height="14" viewBox="0 0 16 14"><path d="M7.5 0 L12.5 5.5 H9.5 V10.5 H5.5 V5.5 H2.5 Z" fill="#3a3a3a"/><rect x="0.5" y="10" width="14.5" height="4" fill="#3a3a3a"/></svg>
<div class="t" style="left:1705.00px;top:615.66px;font-size:17.3px;line-height:17.3px;color:#404040;">(empty)</div>
<div class="r" style="left:288px;top:687px;width:1615px;height:2px;background:#cccccc;"></div>
<div class="r" style="left:225px;top:687px;width:63px;height:1px;background:#cccccc;"></div>
<div class="t" style="left:228px;top:651.01px;width:40px;text-align:center;font-size:17px;line-height:17px;color:#404040">8</div>
<svg class="r" style="left:261px;top:652px;" width="13" height="15" viewBox="0 0 13 15"><path d="M6.5 0 L12.5 6 H0.5 Z M0.5 8.5 H12.5 L6.5 14.5 Z" fill="#000"/></svg>
<svg class="r" style="left:295px;top:658px" width="12" height="14" viewBox="0 0 12 14"><path d="M2.6 6.5 V4.6 A3.4 3.4 0 0 1 9.4 4.6 V6.5" fill="none" stroke="#404040" stroke-width="1.7"/><rect x="0.5" y="6.3" width="11" height="7.5" fill="#404040"/></svg>
<div class="t" style="left:418.00px;top:658.41px;font-size:17px;line-height:17px;color:#404040;">active</div>
<div class="t" style="left:518.50px;top:659.49px;font-size:16.9px;line-height:16.9px;color:#404040;">Hombres</div>
<div class="t" style="left:781.00px;top:658.66px;font-size:16.7px;line-height:16.7px;color:#404040;">men-es</div>
<svg class="r" style="left:1071px;top:655px;" width="11" height="9" viewBox="0 0 11 9"><path d="M0 0 H11 L5.5 9 Z" fill="#ececec"/></svg>
<svg class="r" style="left:1094px;top:660px" width="12" height="14" viewBox="0 0 12 14"><path d="M2.6 6.5 V4.6 A3.4 3.4 0 0 1 9.4 4.6 V6.5" fill="none" stroke="#404040" stroke-width="1.7"/><rect x="0.5" y="6.3" width="11" height="7.5" fill="#404040"/></svg>
<div class="t" style="left:1110.50px;top:658.41px;font-size:17px;line-height:17px;color:#404040;">11</div>
<div class="r" style="left:1188px;top:657px;width:41px;height:22px;border:1px solid #8f8f8f;background:#f0f0f0"></div>
<svg class="r" style="left:1200px;top:662px;" width="18" height="14" viewBox="0 0 18 14"><path d="M11 1.5 H3 Q2 1.5 2 2.5 V11.5 Q2 12.8 3 12.8 H12 Q13.5 12.8 13.5 11.5 V9" fill="none" stroke="#4a4a4a" stroke-width="1.3"/><path d="M7.2 11.2 L7.9 8.3 L14.6 1.8 L16.8 4 L10 10.5 Z" fill="none" stroke="#3a3a3a" stroke-width="1.2" stroke-linejoin="round"/><path d="M13.3 3.1 L15.5 5.3" stroke="#3a3a3a" stroke-width="1.2"/></svg>
<div class="t" style="left:1231.50px;top:658.41px;font-size:17px;line-height:17px;color:#404040;">This is my category ...</div>
<div class="t" style="left:1412.50px;top:658.24px;font-size:17.2px;line-height:17.2px;color:#404040;">product_cat</div>
<div class="r" style="left:1663px;top:654px;width:40px;height:25px;border:1px solid #8f8f8f;background:#f0f0f0"></div>
<svg class="r" style="left:1676px;top:659px;" width="16" height="14" viewBox="0 0 16 14"><path d="M7.5 0 L12.5 5.5 H9.5 V10.5 H5.5 V5.5 H2.5 Z" fill="#3a3a3a"/><rect x="0.5" y="10" width="14.5" height="4" fill="#3a3a3a"/></svg>
<div class="t" style="left:1705.00px;top:658.16px;font-size:17.3px;line-height:17.3px;color:#404040;">(empty)</div>
<div class="r" style="left:288px;top:730px;width:1615px;height:2px;background:#cccccc;"></div>
<div class="r" style="left:225px;top:730px;width:63px;height:1px;background:#cccccc;"></div>
<div class="t" style="left:228px;top:693.51px;width:40px;text-align:center;font-size:17px;line-height:17px;color:#404040">9</div>
<svg class="r" style="left:261px;top:695px;" width="13" height="15" viewBox="0 0 13 15"><path d="M6.5 0 L12.5 6 H0.5 Z M0.5 8.5 H12.5 L6.5 14.5 Z" fill="#000"/></svg>
<svg class="r" style="left:295px;top:701px" width="12" height="14" viewBox="0 0 12 14"><path d="M2.6 6.5 V4.6 A3.4 3.4 0 0 1 9.4 4.6 V6.5" fill="none" stroke="#404040" stroke-width="1.7"/><rect x="0.5" y="6.3" width="11" height="7.5" fill="#404040"/></svg>
<div class="t" style="left:418.00px;top:700.91px;font-size:17px;line-height:17px;color:#404040;">active</div>
<div class="t" style="left:518.50px;top:701.99px;font-size:16.9px;line-height:16.9px;color:#404040;">Vaqueros para hombre</div>
<div class="t" style="left:781.00px;top:701.16px;font-size:16.7px;line-height:16.7px;color:#404040;">mens-jeans-es</div>
<svg class="r" style="left:1071px;top:698px;" width="11" height="9" viewBox="0 0 11 9"><path d="M0 0 H11 L5.5 9 Z" fill="#ececec"/></svg>
<svg class="r" style="left:1094px;top:702px" width="12" height="14" viewBox="0 0 12 14"><path d="M2.6 6.5 V4.6 A3.4 3.4 0 0 1 9.4 4.6 V6.5" fill="none" stroke="#404040" stroke-width="1.7"/><rect x="0.5" y="6.3" width="11" height="7.5" fill="#404040"/></svg>
<div class="t" style="left:1110.50px;top:700.91px;font-size:17px;line-height:17px;color:#404040;">4</div>
<div class="r" style="left:1188px;top:699px;width:41px;height:22px;border:1px solid #8f8f8f;background:#f0f0f0"></div>
<svg class="r" style="left:1200px;top:704px;" width="18" height="14" viewBox="0 0 18 14"><path d="M11 1.5 H3 Q2 1.5 2 2.5 V11.5 Q2 12.8 3 12.8 H12 Q13.5 12.8 13.5 11.5 V9" fill="none" stroke="#4a4a4a" stroke-width="1.3"/><path d="M7.2 11.2 L7.9 8.3 L14.6 1.8 L16.8 4 L10 10.5 Z" fill="none" stroke="#3a3a3a" stroke-width="1.2" stroke-linejoin="round"/><path d="M13.3 3.1 L15.5 5.3" stroke="#3a3a3a" stroke-width="1.2"/></svg>
<div class="t" style="left:1231.50px;top:700.91px;font-size:17px;line-height:17px;color:#404040;">This is my category ...</div>
<div class="t" style="left:1412.50px;top:700.74px;font-size:17.2px;line-height:17.2px;color:#404040;">product_cat</div>
<div class="r" style="left:1663px;top:696px;width:40px;height:25px;border:1px solid #8f8f8f;background:#f0f0f0"></div>
<svg class="r" style="left:1676px;top:702px;" width="16" height="14" viewBox="0 0 16 14"><path d="M7.5 0 L12.5 5.5 H9.5 V10.5 H5.5 V5.5 H2.5 Z" fill="#3a3a3a"/><rect x="0.5" y="10" width="14.5" height="4" fill="#3a3a3a"/></svg>
<div class="t" style="left:1705.00px;top:700.66px;font-size:17.3px;line-height:17.3px;color:#404040;">(empty)</div>
<div class="r" style="left:288px;top:772px;width:1615px;height:2px;background:#cccccc;"></div>
<div class="r" style="left:225px;top:772px;width:63px;height:1px;background:#cccccc;"></div>
<div class="t" style="left:228px;top:736.01px;width:40px;text-align:center;font-size:17px;line-height:17px;color:#404040">10</div>
<svg class="r" style="left:261px;top:738px;" width="13" height="15" viewBox="0 0 13 15"><path d="M6.5 0 L12.5 6 H0.5 Z M0.5 8.5 H12.5 L6.5 14.5 Z" fill="#000"/></svg>
<svg class="r" style="left:295px;top:743px" width="12" height="14" viewBox="0 0 12 14"><path d="M2.6 6.5 V4.6 A3.4 3.4 0 0 1 9.4 4.6 V6.5" fill="none" stroke="#404040" stroke-width="1.7"/><rect x="0.5" y="6.3" width="11" height="7.5" fill="#404040"/></svg>
<div class="t" style="left:418.00px;top:743.41px;font-size:17px;line-height:17px;color:#404040;">active</div>
<div class="t" style="left:518.50px;top:744.49px;font-size:16.9px;line-height:16.9px;color:#404040;">Camisas para hombre</div>
<div class="t" style="left:781.00px;top:743.66px;font-size:16.7px;line-height:16.7px;color:#404040;">mens-shirts-es</div>
<svg class="r" style="left:1071px;top:740px;" width="11" height="9" viewBox="0 0 11 9"><path d="M0 0 H11 L5.5 9 Z" fill="#ececec"/></svg>
<svg class="r" style="left:1094px;top:744px" width="12" height="14" viewBox="0 0 12 14"><path d="M2.6 6.5 V4.6 A3.4 3.4 0 0 1 9.4 4.6 V6.5" fill="none" stroke="#404040" stroke-width="1.7"/><rect x="0.5" y="6.3" width="11" height="7.5" fill="#404040"/></svg>
<div class="t" style="left:1110.50px;top:743.41px;font-size:17px;line-height:17px;color:#404040;">2</div>
<div class="r" style="left:1188px;top:742px;width:41px;height:22px;border:1px solid #8f8f8f;background:#f0f0f0"></div>
<svg class="r" style="left:1200px;top:747px;" width="18" height="14" viewBox="0 0 18 14"><path d="M11 1.5 H3 Q2 1.5 2 2.5 V11.5 Q2 12.8 3 12.8 H12 Q13.5 12.8 13.5 11.5 V9" fill="none" stroke="#4a4a4a" stroke-width="1.3"/><path d="M7.2 11.2 L7.9 8.3 L14.6 1.8 L16.8 4 L10 10.5 Z" fill="none" stroke="#3a3a3a" stroke-width="1.2" stroke-linejoin="round"/><path d="M13.3 3.1 L15.5 5.3" stroke="#3a3a3a" stroke-width="1.2"/></svg>
<div class="t" style="left:1231.50px;top:743.41px;font-size:17px;line-height:17px;color:#404040;">This is my category ...</div>
<div class="t" style="left:1412.50px;top:743.24px;font-size:17.2px;line-height:17.2px;color:#404040;">product_cat</div>
<div class="r" style="left:1663px;top:739px;width:40px;height:25px;border:1px solid #8f8f8f;background:#f0f0f0"></div>
<svg class="r" style="left:1676px;top:744px;" width="16" height="14" viewBox="0 0 16 14"><path d="M7.5 0 L12.5 5.5 H9.5 V10.5 H5.5 V5.5 H2.5 Z" fill="#3a3a3a"/><rect x="0.5" y="10" width="14.5" height="4" fill="#3a3a3a"/></svg>
<div class="t" style="left:1705.00px;top:743.16px;font-size:17.3px;line-height:17.3px;color:#404040;">(empty)</div>
<div class="r" style="left:288px;top:815px;width:1615px;height:2px;background:#cccccc;"></div>
<div class="r" style="left:225px;top:815px;width:63px;height:1px;background:#cccccc;"></div>
<div class="t" style="left:228px;top:778.51px;width:40px;text-align:center;font-size:17px;line-height:17px;color:#404040">11</div>
<svg class="r" style="left:261px;top:780px;" width="13" height="15" viewBox="0 0 13 15"><path d="M6.5 0 L12.5 6 H0.5 Z M0.5 8.5 H12.5 L6.5 14.5 Z" fill="#000"/></svg>
<svg class="r" style="left:295px;top:786px" width="12" height="14" viewBox="0 0 12 14"><path d="M2.6 6.5 V4.6 A3.4 3.4 0 0 1 9.4 4.6 V6.5" fill="none" stroke="#404040" stroke-width="1.7"/><rect x="0.5" y="6.3" width="11" height="7.5" fill="#404040"/></svg>
<div class="t" style="left:418.00px;top:785.91px;font-size:17px;line-height:17px;color:#404040;">active</div>
<div class="t" style="left:518.50px;top:786.99px;font-size:16.9px;line-height:16.9px;color:#404040;">Zapatos de hombre</div>
<div class="t" style="left:781.00px;top:786.16px;font-size:16.7px;line-height:16.7px;color:#404040;">mens-shoes-es</div>
<svg class="r" style="left:1071px;top:783px;" width="11" height="9" viewBox="0 0 11 9"><path d="M0 0 H11 L5.5 9 Z" fill="#ececec"/></svg>
<svg class="r" style="left:1094px;top:787px" width="12" height="14" viewBox="0 0 12 14"><path d="M2.6 6.5 V4.6 A3.4 3.4 0 0 1 9.4 4.6 V6.5" fill="none" stroke="#404040" stroke-width="1.7"/><rect x="0.5" y="6.3" width="11" height="7.5" fill="#404040"/></svg>
<div class="t" style="left:1110.50px;top:785.91px;font-size:17px;line-height:17px;color:#404040;">4</div>
<div class="r" style="left:1188px;top:784px;width:41px;height:22px;border:1px solid #8f8f8f;background:#f0f0f0"></div>
<svg class="r" style="left:1200px;top:790px;" width="18" height="14" viewBox="0 0 18 14"><path d="M11 1.5 H3 Q2 1.5 2 2.5 V11.5 Q2 12.8 3 12.8 H12 Q13.5 12.8 13.5 11.5 V9" fill="none" stroke="#4a4a4a" stroke-width="1.3"/><path d="M7.2 11.2 L7.9 8.3 L14.6 1.8 L16.8 4 L10 10.5 Z" fill="none" stroke="#3a3a3a" stroke-width="1.2" stroke-linejoin="round"/><path d="M13.3 3.1 L15.5 5.3" stroke="#3a3a3a" stroke-width="1.2"/></svg>
<div class="t" style="left:1231.50px;top:785.91px;font-size:17px;line-height:17px;color:#404040;">This is my category ...</div>
<div class="t" style="left:1412.50px;top:785.74px;font-size:17.2px;line-height:17.2px;color:#404040;">product_cat</div>
<div class="r" style="left:1663px;top:781px;width:40px;height:25px;border:1px solid #8f8f8f;background:#f0f0f0"></div>
<svg class="r" style="left:1676px;top:787px;" width="16" height="14" viewBox="0 0 16 14"><path d="M7.5 0 L12.5 5.5 H9.5 V10.5 H5.5 V5.5 H2.5 Z" fill="#3a3a3a"/><rect x="0.5" y="10" width="14.5" height="4" fill="#3a3a3a"/></svg>
<div class="t" style="left:1705.00px;top:785.66px;font-size:17.3px;line-height:17.3px;color:#404040;">(empty)</div>
<div class="r" style="left:288px;top:857px;width:1615px;height:2px;background:#cccccc;"></div>
<div class="r" style="left:225px;top:857px;width:63px;height:1px;background:#cccccc;"></div>
<div class="t" style="left:228px;top:821.01px;width:40px;text-align:center;font-size:17px;line-height:17px;color:#404040">12</div>
<svg class="r" style="left:261px;top:822px;" width="13" height="15" viewBox="0 0 13 15"><path d="M6.5 0 L12.5 6 H0.5 Z M0.5 8.5 H12.5 L6.5 14.5 Z" fill="#000"/></svg>
<svg class="r" style="left:295px;top:828px" width="12" height="14" viewBox="0 0 12 14"><path d="M2.6 6.5 V4.6 A3.4 3.4 0 0 1 9.4 4.6 V6.5" fill="none" stroke="#404040" stroke-width="1.7"/><rect x="0.5" y="6.3" width="11" height="7.5" fill="#404040"/></svg>
<div class="t" style="left:418.00px;top:828.41px;font-size:17px;line-height:17px;color:#404040;">active</div>
<div class="t" style="left:518.50px;top:829.49px;font-size:16.9px;line-height:16.9px;color:#404040;">M&aacute;s populares</div>
<div class="t" style="left:781.00px;top:828.66px;font-size:16.7px;line-height:16.7px;color:#404040;">most-popular-es</div>
<svg class="r" style="left:1071px;top:825px;" width="11" height="9" viewBox="0 0 11 9"><path d="M0 0 H11 L5.5 9 Z" fill="#ececec"/></svg>
<svg class="r" style="left:1094px;top:830px" width="12" height="14" viewBox="0 0 12 14"><path d="M2.6 6.5 V4.6 A3.4 3.4 0 0 1 9.4 4.6 V6.5" fill="none" stroke="#404040" stroke-width="1.7"/><rect x="0.5" y="6.3" width="11" height="7.5" fill="#404040"/></svg>
<div class="t" style="left:1110.50px;top:828.41px;font-size:17px;line-height:17px;color:#404040;">7</div>
<div class="r" style="left:1188px;top:827px;width:41px;height:22px;border:1px solid #8f8f8f;background:#f0f0f0"></div>
<svg class="r" style="left:1200px;top:832px;" width="18" height="14" viewBox="0 0 18 14"><path d="M11 1.5 H3 Q2 1.5 2 2.5 V11.5 Q2 12.8 3 12.8 H12 Q13.5 12.8 13.5 11.5 V9" fill="none" stroke="#4a4a4a" stroke-width="1.3"/><path d="M7.2 11.2 L7.9 8.3 L14.6 1.8 L16.8 4 L10 10.5 Z" fill="none" stroke="#3a3a3a" stroke-width="1.2" stroke-linejoin="round"/><path d="M13.3 3.1 L15.5 5.3" stroke="#3a3a3a" stroke-width="1.2"/></svg>
<div class="t" style="left:1231.50px;top:828.41px;font-size:17px;line-height:17px;color:#404040;">This is my category ...</div>
<div class="t" style="left:1412.50px;top:828.24px;font-size:17.2px;line-height:17.2px;color:#404040;">product_cat</div>
<div class="r" style="left:1663px;top:824px;width:40px;height:25px;border:1px solid #8f8f8f;background:#f0f0f0"></div>
<svg class="r" style="left:1676px;top:829px;" width="16" height="14" viewBox="0 0 16 14"><path d="M7.5 0 L12.5 5.5 H9.5 V10.5 H5.5 V5.5 H2.5 Z" fill="#3a3a3a"/><rect x="0.5" y="10" width="14.5" height="4" fill="#3a3a3a"/></svg>
<div class="t" style="left:1705.00px;top:828.16px;font-size:17.3px;line-height:17.3px;color:#404040;">(empty)</div>
<div class="r" style="left:288px;top:900px;width:1615px;height:2px;background:#cccccc;"></div>
<div class="r" style="left:225px;top:900px;width:63px;height:1px;background:#cccccc;"></div>
<div class="t" style="left:228px;top:863.51px;width:40px;text-align:center;font-size:17px;line-height:17px;color:#404040">13</div>
<svg class="r" style="left:261px;top:865px;" width="13" height="15" viewBox="0 0 13 15"><path d="M6.5 0 L12.5 6 H0.5 Z M0.5 8.5 H12.5 L6.5 14.5 Z" fill="#000"/></svg>
<svg class="r" style="left:295px;top:871px" width="12" height="14" viewBox="0 0 12 14"><path d="M2.6 6.5 V4.6 A3.4 3.4 0 0 1 9.4 4.6 V6.5" fill="none" stroke="#404040" stroke-width="1.7"/><rect x="0.5" y="6.3" width="11" height="7.5" fill="#404040"/></svg>
<div class="t" style="left:418.00px;top:870.91px;font-size:17px;line-height:17px;color:#404040;">active</div>
<div class="t" style="left:518.50px;top:871.99px;font-size:16.9px;line-height:16.9px;color:#404040;">Tazas</div>
<div class="t" style="left:781.00px;top:871.16px;font-size:16.7px;line-height:16.7px;color:#404040;">mugs-es</div>
<svg class="r" style="left:1071px;top:868px;" width="11" height="9" viewBox="0 0 11 9"><path d="M0 0 H11 L5.5 9 Z" fill="#ececec"/></svg>
<svg class="r" style="left:1094px;top:872px" width="12" height="14" viewBox="0 0 12 14"><path d="M2.6 6.5 V4.6 A3.4 3.4 0 0 1 9.4 4.6 V6.5" fill="none" stroke="#404040" stroke-width="1.7"/><rect x="0.5" y="6.3" width="11" height="7.5" fill="#404040"/></svg>
<div class="t" style="left:1110.50px;top:870.91px;font-size:17px;line-height:17px;color:#404040;">5</div>
<div class="r" style="left:1188px;top:869px;width:41px;height:22px;border:1px solid #8f8f8f;background:#f0f0f0"></div>
<svg class="r" style="left:1200px;top:874px;" width="18" height="14" viewBox="0 0 18 14"><path d="M11 1.5 H3 Q2 1.5 2 2.5 V11.5 Q2 12.8 3 12.8 H12 Q13.5 12.8 13.5 11.5 V9" fill="none" stroke="#4a4a4a" stroke-width="1.3"/><path d="M7.2 11.2 L7.9 8.3 L14.6 1.8 L16.8 4 L10 10.5 Z" fill="none" stroke="#3a3a3a" stroke-width="1.2" stroke-linejoin="round"/><path d="M13.3 3.1 L15.5 5.3" stroke="#3a3a3a" stroke-width="1.2"/></svg>
<div class="t" style="left:1231.50px;top:870.91px;font-size:17px;line-height:17px;color:#404040;">This is my category ...</div>
<div class="t" style="left:1412.50px;top:870.74px;font-size:17.2px;line-height:17.2px;color:#404040;">product_cat</div>
<div class="r" style="left:1663px;top:866px;width:40px;height:25px;border:1px solid #8f8f8f;background:#f0f0f0"></div>
<svg class="r" style="left:1676px;top:872px;" width="16" height="14" viewBox="0 0 16 14"><path d="M7.5 0 L12.5 5.5 H9.5 V10.5 H5.5 V5.5 H2.5 Z" fill="#3a3a3a"/><rect x="0.5" y="10" width="14.5" height="4" fill="#3a3a3a"/></svg>
<div class="t" style="left:1705.00px;top:870.66px;font-size:17.3px;line-height:17.3px;color:#404040;">(empty)</div>
<div class="r" style="left:288px;top:942px;width:1615px;height:2px;background:#cccccc;"></div>
<div class="r" style="left:225px;top:942px;width:63px;height:1px;background:#cccccc;"></div>
<div class="t" style="left:228px;top:906.01px;width:40px;text-align:center;font-size:17px;line-height:17px;color:#404040">14</div>
<svg class="r" style="left:261px;top:908px;" width="13" height="15" viewBox="0 0 13 15"><path d="M6.5 0 L12.5 6 H0.5 Z M0.5 8.5 H12.5 L6.5 14.5 Z" fill="#000"/></svg>
<svg class="r" style="left:295px;top:913px" width="12" height="14" viewBox="0 0 12 14"><path d="M2.6 6.5 V4.6 A3.4 3.4 0 0 1 9.4 4.6 V6.5" fill="none" stroke="#404040" stroke-width="1.7"/><rect x="0.5" y="6.3" width="11" height="7.5" fill="#404040"/></svg>
<div class="t" style="left:418.00px;top:913.41px;font-size:17px;line-height:17px;color:#404040;">active</div>
<div class="t" style="left:518.50px;top:914.49px;font-size:16.9px;line-height:16.9px;color:#404040;">Novedades</div>
<div class="t" style="left:781.00px;top:913.66px;font-size:16.7px;line-height:16.7px;color:#404040;">new-arrival-es</div>
<svg class="r" style="left:1071px;top:910px;" width="11" height="9" viewBox="0 0 11 9"><path d="M0 0 H11 L5.5 9 Z" fill="#ececec"/></svg>
<svg class="r" style="left:1094px;top:914px" width="12" height="14" viewBox="0 0 12 14"><path d="M2.6 6.5 V4.6 A3.4 3.4 0 0 1 9.4 4.6 V6.5" fill="none" stroke="#404040" stroke-width="1.7"/><rect x="0.5" y="6.3" width="11" height="7.5" fill="#404040"/></svg>
<div class="t" style="left:1110.50px;top:913.41px;font-size:17px;line-height:17px;color:#404040;">4</div>
<div class="r" style="left:1188px;top:912px;width:41px;height:22px;border:1px solid #8f8f8f;background:#f0f0f0"></div>
<svg class="r" style="left:1200px;top:917px;" width="18" height="14" viewBox="0 0 18 14"><path d="M11 1.5 H3 Q2 1.5 2 2.5 V11.5 Q2 12.8 3 12.8 H12 Q13.5 12.8 13.5 11.5 V9" fill="none" stroke="#4a4a4a" stroke-width="1.3"/><path d="M7.2 11.2 L7.9 8.3 L14.6 1.8 L16.8 4 L10 10.5 Z" fill="none" stroke="#3a3a3a" stroke-width="1.2" stroke-linejoin="round"/><path d="M13.3 3.1 L15.5 5.3" stroke="#3a3a3a" stroke-width="1.2"/></svg>
<div class="t" style="left:1231.50px;top:913.41px;font-size:17px;line-height:17px;color:#404040;">This is my category ...</div>
<div class="t" style="left:1412.50px;top:913.24px;font-size:17.2px;line-height:17.2px;color:#404040;">product_cat</div>
<div class="r" style="left:1663px;top:909px;width:40px;height:25px;border:1px solid #8f8f8f;background:#f0f0f0"></div>
<svg class="r" style="left:1676px;top:914px;" width="16" height="14" viewBox="0 0 16 14"><path d="M7.5 0 L12.5 5.5 H9.5 V10.5 H5.5 V5.5 H2.5 Z" fill="#3a3a3a"/><rect x="0.5" y="10" width="14.5" height="4" fill="#3a3a3a"/></svg>
<div class="t" style="left:1705.00px;top:913.16px;font-size:17.3px;line-height:17.3px;color:#404040;">(empty)</div>
<div class="r" style="left:288px;top:985px;width:1615px;height:2px;background:#cccccc;"></div>
<div class="r" style="left:225px;top:985px;width:63px;height:1px;background:#cccccc;"></div>
<div class="t" style="left:228px;top:948.51px;width:40px;text-align:center;font-size:17px;line-height:17px;color:#404040">15</div>
<svg class="r" style="left:261px;top:950px;" width="13" height="15" viewBox="0 0 13 15"><path d="M6.5 0 L12.5 6 H0.5 Z M0.5 8.5 H12.5 L6.5 14.5 Z" fill="#000"/></svg>
<svg class="r" style="left:295px;top:956px" width="12" height="14" viewBox="0 0 12 14"><path d="M2.6 6.5 V4.6 A3.4 3.4 0 0 1 9.4 4.6 V6.5" fill="none" stroke="#404040" stroke-width="1.7"/><rect x="0.5" y="6.3" width="11" height="7.5" fill="#404040"/></svg>
<div class="t" style="left:418.00px;top:955.91px;font-size:17px;line-height:17px;color:#404040;">active</div>
<div class="t" style="left:518.50px;top:956.99px;font-size:16.9px;line-height:16.9px;color:#404040;">Monederos y bolsos</div>
<div class="t" style="left:781.00px;top:956.16px;font-size:16.7px;line-height:16.7px;color:#404040;">purses-and-handba...</div>
<svg class="r" style="left:1071px;top:953px;" width="11" height="9" viewBox="0 0 11 9"><path d="M0 0 H11 L5.5 9 Z" fill="#ececec"/></svg>
<svg class="r" style="left:1094px;top:957px" width="12" height="14" viewBox="0 0 12 14"><path d="M2.6 6.5 V4.6 A3.4 3.4 0 0 1 9.4 4.6 V6.5" fill="none" stroke="#404040" stroke-width="1.7"/><rect x="0.5" y="6.3" width="11" height="7.5" fill="#404040"/></svg>
<div class="t" style="left:1110.50px;top:955.91px;font-size:17px;line-height:17px;color:#404040;">4</div>
<div class="r" style="left:1188px;top:954px;width:41px;height:22px;border:1px solid #8f8f8f;background:#f0f0f0"></div>
<svg class="r" style="left:1200px;top:960px;" width="18" height="14" viewBox="0 0 18 14"><path d="M11 1.5 H3 Q2 1.5 2 2.5 V11.5 Q2 12.8 3 12.8 H12 Q13.5 12.8 13.5 11.5 V9" fill="none" stroke="#4a4a4a" stroke-width="1.3"/><path d="M7.2 11.2 L7.9 8.3 L14.6 1.8 L16.8 4 L10 10.5 Z" fill="none" stroke="#3a3a3a" stroke-width="1.2" stroke-linejoin="round"/><path d="M13.3 3.1 L15.5 5.3" stroke="#3a3a3a" stroke-width="1.2"/></svg>
<div class="t" style="left:1231.50px;top:955.91px;font-size:17px;line-height:17px;color:#404040;">This is my category ...</div>
<div class="t" style="left:1412.50px;top:955.74px;font-size:17.2px;line-height:17.2px;color:#404040;">product_cat</div>
<div class="r" style="left:1663px;top:951px;width:40px;height:25px;border:1px solid #8f8f8f;background:#f0f0f0"></div>
<svg class="r" style="left:1676px;top:957px;" width="16" height="14" viewBox="0 0 16 14"><path d="M7.5 0 L12.5 5.5 H9.5 V10.5 H5.5 V5.5 H2.5 Z" fill="#3a3a3a"/><rect x="0.5" y="10" width="14.5" height="4" fill="#3a3a3a"/></svg>
<div class="t" style="left:1705.00px;top:955.66px;font-size:17.3px;line-height:17.3px;color:#404040;">(empty)</div>
<div class="r" style="left:288px;top:1027px;width:1615px;height:2px;background:#cccccc;"></div>
<div class="r" style="left:225px;top:1027px;width:63px;height:1px;background:#cccccc;"></div>
<div class="t" style="left:228px;top:991.01px;width:40px;text-align:center;font-size:17px;line-height:17px;color:#404040">16</div>
<svg class="r" style="left:261px;top:992px;" width="13" height="15" viewBox="0 0 13 15"><path d="M6.5 0 L12.5 6 H0.5 Z M0.5 8.5 H12.5 L6.5 14.5 Z" fill="#000"/></svg>
<svg class="r" style="left:295px;top:998px" width="12" height="14" viewBox="0 0 12 14"><path d="M2.6 6.5 V4.6 A3.4 3.4 0 0 1 9.4 4.6 V6.5" fill="none" stroke="#404040" stroke-width="1.7"/><rect x="0.5" y="6.3" width="11" height="7.5" fill="#404040"/></svg>
<div class="t" style="left:418.00px;top:998.41px;font-size:17px;line-height:17px;color:#404040;">active</div>
<div class="t" style="left:518.50px;top:999.49px;font-size:16.9px;line-height:16.9px;color:#404040;">Camisetas</div>
<div class="t" style="left:781.00px;top:998.66px;font-size:16.7px;line-height:16.7px;color:#404040;">tshirts-es</div>
<svg class="r" style="left:1071px;top:995px;" width="11" height="9" viewBox="0 0 11 9"><path d="M0 0 H11 L5.5 9 Z" fill="#ececec"/></svg>
<svg class="r" style="left:1094px;top:1000px" width="12" height="14" viewBox="0 0 12 14"><path d="M2.6 6.5 V4.6 A3.4 3.4 0 0 1 9.4 4.6 V6.5" fill="none" stroke="#404040" stroke-width="1.7"/><rect x="0.5" y="6.3" width="11" height="7.5" fill="#404040"/></svg>
<div class="t" style="left:1110.50px;top:998.41px;font-size:17px;line-height:17px;color:#404040;">7</div>
<div class="r" style="left:1188px;top:997px;width:41px;height:22px;border:1px solid #8f8f8f;background:#f0f0f0"></div>
<svg class="r" style="left:1200px;top:1002px;" width="18" height="14" viewBox="0 0 18 14"><path d="M11 1.5 H3 Q2 1.5 2 2.5 V11.5 Q2 12.8 3 12.8 H12 Q13.5 12.8 13.5 11.5 V9" fill="none" stroke="#4a4a4a" stroke-width="1.3"/><path d="M7.2 11.2 L7.9 8.3 L14.6 1.8 L16.8 4 L10 10.5 Z" fill="none" stroke="#3a3a3a" stroke-width="1.2" stroke-linejoin="round"/><path d="M13.3 3.1 L15.5 5.3" stroke="#3a3a3a" stroke-width="1.2"/></svg>
<div class="t" style="left:1231.50px;top:998.41px;font-size:17px;line-height:17px;color:#404040;">This is my category ...</div>
<div class="t" style="left:1412.50px;top:998.24px;font-size:17.2px;line-height:17.2px;color:#404040;">product_cat</div>
<div class="r" style="left:1663px;top:994px;width:40px;height:25px;border:1px solid #8f8f8f;background:#f0f0f0"></div>
<svg class="r" style="left:1676px;top:999px;" width="16" height="14" viewBox="0 0 16 14"><path d="M7.5 0 L12.5 5.5 H9.5 V10.5 H5.5 V5.5 H2.5 Z" fill="#3a3a3a"/><rect x="0.5" y="10" width="14.5" height="4" fill="#3a3a3a"/></svg>
<div class="t" style="left:1705.00px;top:998.16px;font-size:17.3px;line-height:17.3px;color:#404040;">(empty)</div>
<div class="t" style="left:228px;top:1033.51px;width:40px;text-align:center;font-size:17px;line-height:17px;color:#404040">17</div>
<svg class="r" style="left:261px;top:1035px;" width="13" height="15" viewBox="0 0 13 15"><path d="M6.5 0 L12.5 6 H0.5 Z M0.5 8.5 H12.5 L6.5 14.5 Z" fill="#000"/></svg>
<svg class="r" style="left:295px;top:1041px" width="12" height="14" viewBox="0 0 12 14"><path d="M2.6 6.5 V4.6 A3.4 3.4 0 0 1 9.4 4.6 V6.5" fill="none" stroke="#404040" stroke-width="1.7"/><rect x="0.5" y="6.3" width="11" height="7.5" fill="#404040"/></svg>
<div class="t" style="left:418.00px;top:1040.91px;font-size:17px;line-height:17px;color:#404040;">active</div>
<div class="t" style="left:518.50px;top:1041.99px;font-size:16.9px;line-height:16.9px;color:#404040;">Utensilios</div>
<div class="t" style="left:781.00px;top:1041.16px;font-size:16.7px;line-height:16.7px;color:#404040;">utensils-es</div>
<svg class="r" style="left:1071px;top:1038px;" width="11" height="9" viewBox="0 0 11 9"><path d="M0 0 H11 L5.5 9 Z" fill="#ececec"/></svg>
<svg class="r" style="left:1094px;top:1042px" width="12" height="14" viewBox="0 0 12 14"><path d="M2.6 6.5 V4.6 A3.4 3.4 0 0 1 9.4 4.6 V6.5" fill="none" stroke="#404040" stroke-width="1.7"/><rect x="0.5" y="6.3" width="11" height="7.5" fill="#404040"/></svg>
<div class="t" style="left:1110.50px;top:1040.91px;font-size:17px;line-height:17px;color:#404040;">11</div>
<div class="r" style="left:1188px;top:1039px;width:41px;height:22px;border:1px solid #8f8f8f;background:#f0f0f0"></div>
<svg class="r" style="left:1200px;top:1044px;" width="18" height="14" viewBox="0 0 18 14"><path d="M11 1.5 H3 Q2 1.5 2 2.5 V11.5 Q2 12.8 3 12.8 H12 Q13.5 12.8 13.5 11.5 V9" fill="none" stroke="#4a4a4a" stroke-width="1.3"/><path d="M7.2 11.2 L7.9 8.3 L14.6 1.8 L16.8 4 L10 10.5 Z" fill="none" stroke="#3a3a3a" stroke-width="1.2" stroke-linejoin="round"/><path d="M13.3 3.1 L15.5 5.3" stroke="#3a3a3a" stroke-width="1.2"/></svg>
<div class="t" style="left:1231.50px;top:1040.91px;font-size:17px;line-height:17px;color:#404040;">This is my category ...</div>
<div class="t" style="left:1412.50px;top:1040.74px;font-size:17.2px;line-height:17.2px;color:#404040;">product_cat</div>
<div class="r" style="left:1663px;top:1036px;width:40px;height:25px;border:1px solid #8f8f8f;background:#f0f0f0"></div>
<svg class="r" style="left:1676px;top:1042px;" width="16" height="14" viewBox="0 0 16 14"><path d="M7.5 0 L12.5 5.5 H9.5 V10.5 H5.5 V5.5 H2.5 Z" fill="#3a3a3a"/><rect x="0.5" y="10" width="14.5" height="4" fill="#3a3a3a"/></svg>
<div class="t" style="left:1705.00px;top:1040.66px;font-size:17.3px;line-height:17.3px;color:#404040;">(empty)</div>
<div class="r" style="left:511px;top:348px;width:264px;height:2px;background:#6674f4;"></div>
<div class="r" style="left:511px;top:348px;width:2px;height:715px;background:#6674f4;"></div>
<div class="r" style="left:773px;top:348px;width:2px;height:43px;background:#6674f4;"></div>
<div class="r" style="left:774px;top:391px;width:1px;height:672px;background:#6674f4;"></div>
<div class="r" style="left:511px;top:388px;width:264px;height:3px;background:#6674f4;"></div>
<div class="r" style="left:513px;top:391px;width:261px;height:1px;background:#ffffff;"></div>
<div class="t" style="left:288px;width:124px;text-align:center;top:323.41px;font-size:17px;line-height:17px;color:#333">Hierarchy</div>
<div class="t" style="left:412px;width:100px;text-align:center;top:323.41px;font-size:17px;line-height:17px;color:#333">Status</div>
<div class="t" style="left:512px;width:262px;text-align:center;top:323.41px;font-size:17px;line-height:17px;color:#333">Name</div>
<div class="t" style="left:774px;width:188px;text-align:center;top:323.41px;font-size:17px;line-height:17px;color:#333">Slug</div>
<div class="t" style="left:962px;width:125px;text-align:center;top:323.41px;font-size:17px;line-height:17px;color:#333">Parent</div>
<div class="t" style="left:1087px;width:93px;text-align:center;top:323.41px;font-size:17px;line-height:17px;color:#333">Count</div>
<div class="t" style="left:1180px;width:225px;text-align:center;top:323.41px;font-size:17px;line-height:17px;color:#333">Description</div>
<div class="t" style="left:1405px;width:125px;text-align:center;top:323.41px;font-size:17px;line-height:17px;color:#333">Taxonomy</div>
<div class="t" style="left:1530px;width:125px;text-align:center;top:323.41px;font-size:17px;line-height:17px;color:#333">Display type</div>
<div class="t" style="left:1655px;width:248px;text-align:center;top:323.41px;font-size:17px;line-height:17px;color:#333">Thumbnail</div>
<div class="r" style="left:1903px;top:0px;width:17px;height:1063px;background:#f1f1f1;"></div>
<svg class="r" style="left:1906px;top:5px;" width="11" height="8" viewBox="0 0 11 8"><path d="M5.5 2 L9 5.8 H2 Z" fill="#a3a3a3"/></svg>
<div class="r" style="left:1905px;top:17px;width:13px;height:702px;background:#c1c1c1;"></div>
<svg class="r" style="left:1906px;top:1050px;" width="11" height="8" viewBox="0 0 11 8"><path d="M1 1.5 H10 L5.5 6.5 Z" fill="#505050"/></svg>
<div class="r" style="left:0px;top:1063px;width:1903px;height:17px;background:#f1f1f1;"></div>
<div class="r" style="left:17px;top:1065px;width:902px;height:13px;background:#c1c1c1;"></div>
<svg class="r" style="left:5px;top:1066px;" width="8" height="11" viewBox="0 0 8 11"><path d="M5.5 1.5 V9.5 L1 5.5 Z" fill="#a3a3a3"/></svg>
<svg class="r" style="left:1891px;top:1066px;" width="8" height="11" viewBox="0 0 8 11"><path d="M1.5 1 V10 L6.5 5.5 Z" fill="#505050"/></svg>
<div class="r" style="left:1903px;top:1063px;width:17px;height:17px;background:#dcdcdc;"></div>
<svg class="r" style="left:0;top:0" width="1920" height="1080" viewBox="0 0 1920 1080"><g fill="none" stroke="#fff" stroke-width="9" stroke-linecap="butt"><path d="M705 121 L653.5 293"/><path d="M648.5 276.5 L653 296 L668.5 283"/></g><g fill="none" stroke="#ff0000" stroke-width="4.6" stroke-linecap="butt"><path d="M705 121 L654 291"/><path d="M648.5 276.5 L653 296 L668.5 283"/></g></svg>

</body></html>
